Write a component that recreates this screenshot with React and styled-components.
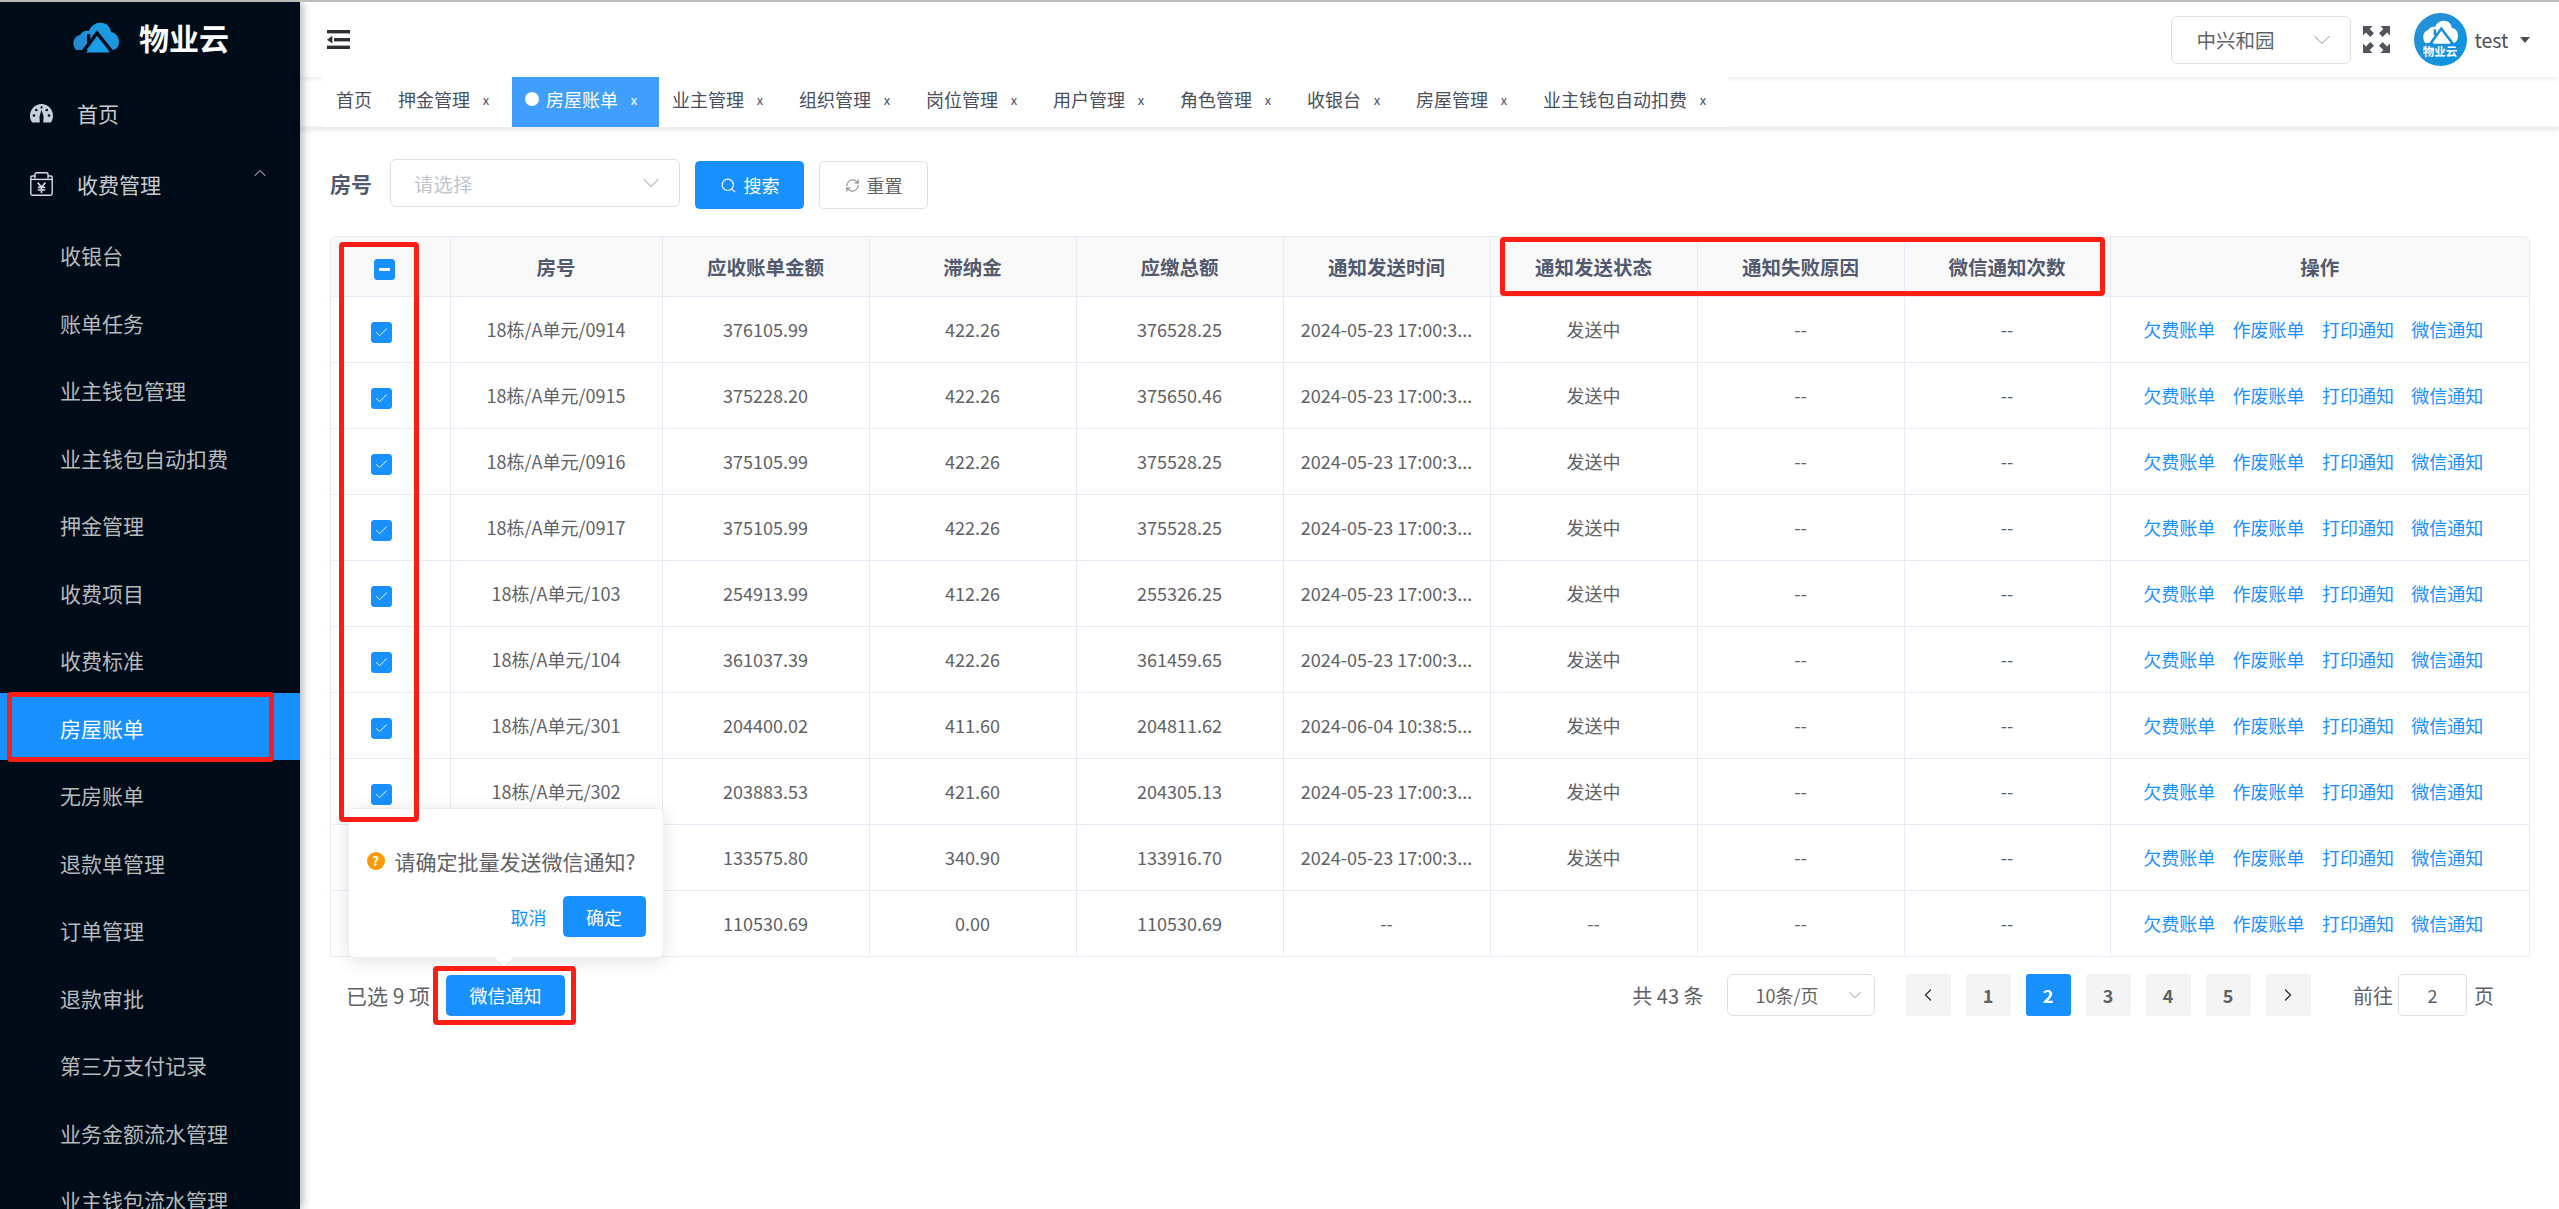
import React from 'react';
import styled, { createGlobalStyle } from 'styled-components';
import { ChevronDown, ChevronUp, ChevronLeft, ChevronRight, Search, RefreshCw, Check } from 'lucide-react';

const GlobalStyle = createGlobalStyle`
  html, body {
    margin: 0;
    padding: 0;
    height: 100%;
    overflow: hidden;
    background: #fff;
  }
  body {
    font-family: "Noto Sans CJK SC", "Noto Sans", sans-serif;
    color: #606266;
  }
  * { box-sizing: border-box; }
`;

const Page = styled.div`
  position: relative;
  width: 2559px;
  height: 1209px;
  display: flex;
  border-top: 2px solid #bcbcbc;
  overflow: hidden;
`;

const Sidebar = styled.aside`
  width: 300px;
  flex: none;
  height: 100%;
  background: #000c17;
  box-shadow: 2px 0 9px rgba(0, 21, 41, 0.35);
  overflow: hidden;
  z-index: 3;
`;

const Brand = styled.div`
  height: 76px;
  display: flex;
  align-items: center;
  gap: 20px;
  padding: 0 0 6px 73px;
  color: #fff;
  font-size: 30px;
  font-weight: 700;
`;

const MenuItem = styled.div`
  height: ${(p) => (p.$sub ? '67.5px' : `${p.$height}px`)};
  display: flex;
  align-items: center;
  padding-left: ${(p) => (p.$sub ? '60px' : '30px')};
  padding-top: ${(p) => (p.$sub ? '3px' : '0')};
  font-size: 21px;
  color: ${(p) => (p.$active ? '#fff' : p.$sub ? 'rgba(255,255,255,0.72)' : 'rgba(255,255,255,0.8)')};
  background: ${(p) => (p.$active ? '#1890ff' : 'transparent')};
  position: relative;
`;

const MenuLabel = styled.span`
  margin-left: 24px;
`;

const MenuArrow = styled(ChevronUp)`
  position: absolute;
  left: 250px;
  top: 15px;
  color: rgba(255, 255, 255, 0.5);
`;

const Main = styled.main`
  flex: 1;
  min-width: 0;
  display: flex;
  flex-direction: column;
`;

const Header = styled.header`
  height: 75px;
  flex: none;
  display: flex;
  align-items: center;
  justify-content: space-between;
  padding: 0 29.5px 0 27px;
  background: #fff;
  box-shadow: 0 1px 6px rgba(0, 21, 41, 0.1);
  position: relative;
`;

const HeaderRight = styled.div`
  display: flex;
  align-items: center;
`;

const SelectBox = styled.div`
  display: flex;
  align-items: center;
  justify-content: space-between;
  width: ${(p) => p.$width}px;
  height: ${(p) => p.$height}px;
  padding: 0 ${(p) => p.$arrowPad || 14}px 0 ${(p) => p.$pad}px;
  border: 1.5px solid #dcdfe6;
  border-radius: 6px;
  background: #fff;
  font-size: ${(p) => p.$size || 19.5}px;
  color: ${(p) => (p.$placeholder ? '#c0c4cc' : '#606266')};
  flex: none;
  svg { color: #c0c4cc; }
`;

const ExpandIcon = styled.svg`
  margin: 0 24px 0 12px;
  display: block;
`;

const Avatar = styled.div`
  width: 53px;
  height: 53px;
  margin-right: 8px;
  border-radius: 50%;
  background: linear-gradient(135deg, #2a8fd6, #0b95e0);
  display: flex;
  flex-direction: column;
  align-items: center;
  gap: 1px;
  overflow: hidden;
  color: #fff;
  font-size: 11.5px;
  font-weight: 700;
  line-height: 13px;
  padding-top: 7px;
`;

const UserName = styled.span`
  font-size: 19.5px;
  color: #4a4f57;
  width: 33px;
`;

const Caret = styled.span`
  margin-left: 12px;
  width: 0;
  height: 0;
  border-left: 5px solid transparent;
  border-right: 5px solid transparent;
  border-top: 6px solid #4a4f57;
`;

const TabBar = styled.div`
  height: 50px;
  flex: none;
  margin-left: 23px;
  width: 1405px;
  display: flex;
  background: #fff;
  position: relative;
  z-index: 1;
`;

const TabRule = styled.div`
  height: 2px;
  margin-bottom: -2px;
  box-shadow: 0 1px 4px rgba(0, 21, 41, 0.16);
  background: #eee;
`;

const Tab = styled.div`
  flex: none;
  height: 50px;
  padding: 0 13px 6px;
  display: flex;
  align-items: center;
  white-space: nowrap;
  font-size: 18px;
  color: ${(p) => (p.$active ? '#fff' : '#495060')};
  background: ${(p) => (p.$active ? '#409eff' : 'transparent')};
`;

const TabDot = styled.span`
  width: 14px;
  height: 14px;
  border-radius: 50%;
  background: #fff;
  margin-right: 7px;
`;

const TabClose = styled.span`
  margin-left: 11px;
  margin-right: ${(p) => (p.$active ? 7 : 8)}px;
  font-size: 13px;
  width: 10px;
  text-align: center;
`;

const Content = styled.section`
  flex: 1;
  padding: 32px 29px 0 30px;
`;

const FilterRow = styled.div`
  display: flex;
  align-items: flex-end;
  height: 50px;
`;

const FilterLabel = styled.label`
  width: 60px;
  align-self: flex-start;
  line-height: 48px;
  font-size: 21px;
  font-weight: 700;
  color: #515a6e;
`;

const FilterField = styled.div`
  align-self: flex-start;
`;

const Button = styled.button`
  display: inline-flex;
  align-items: center;
  justify-content: center;
  gap: ${(p) => p.$gap || 0}px;
  width: ${(p) => p.$width}px;
  height: ${(p) => p.$height}px;
  margin-left: ${(p) => p.$left || 0}px;
  padding: 0;
  font: inherit;
  font-size: 18px;
  border-radius: 4.5px;
  border: 1.5px solid ${(p) => (p.$plain ? '#dcdfe6' : '#1890ff')};
  background: ${(p) => (p.$plain ? '#fff' : '#1890ff')};
  color: ${(p) => (p.$plain ? '#606266' : '#fff')};
`;

const TableWrap = styled.div`
  margin-top: 27px;
  border: 1.5px solid #e6ebf5;
  border-bottom-width: 1px;
  border-radius: 6px 6px 0 0;
  overflow: hidden;
`;

const Table = styled.table`
  width: 100%;
  table-layout: fixed;
  border-collapse: collapse;
`;

const Th = styled.th`
  height: 59px;
  padding: 0 15px;
  background: #f8f8f9;
  border-right: 1.5px solid #e6ebf5;
  border-bottom: 1.5px solid #e6ebf5;
  font-size: 19.5px;
  font-weight: 700;
  color: #515a6e;
  text-align: center;
  &:last-child { border-right: 0; }
`;

const Td = styled.td`
  height: 66px;
  padding: 0 15px;
  border-right: 1.5px solid #e6ebf5;
  border-bottom: 1.5px solid #e6ebf5;
  font-size: 18px;
  color: #606266;
  text-align: center;
  white-space: nowrap;
  overflow: hidden;
  &:last-child {
    border-right: 0;
    padding-right: 28px;
  }
  tr:last-child & { border-bottom: 0; }
`;

const CheckBox = styled.span`
  display: inline-flex;
  align-items: center;
  justify-content: center;
  vertical-align: middle;
  width: 21px;
  height: 21px;
  border-radius: 3px;
  background: ${(p) => (p.$on ? '#1890ff' : '#fff')};
  border: 1.5px solid ${(p) => (p.$on ? '#1890ff' : '#dcdfe6')};
  color: #fff;
  margin: 2px 17px 0 0;
`;

const HeadCheck = styled(CheckBox)`
  margin: 0 11px 0 0;
  &::after {
    content: '';
    width: 11px;
    height: 2.5px;
    background: #fff;
  }
`;

const ActionLink = styled.a`
  color: #1890ff;
  margin: 0 8.65px;
  font-size: 18px;
`;

const Footer = styled.div`
  position: relative;
  display: flex;
  align-items: center;
  justify-content: space-between;
  padding: 17px 36px 0 16px;
`;

const FooterLeft = styled.div`
  display: flex;
  align-items: center;
`;

const Selected = styled.span`
  font-size: 21px;
  color: #606266;
  width: 100px;
  white-space: nowrap;
`;

const Pager = styled.div`
  display: flex;
  align-items: center;
  font-size: 20px;
`;

const PagerText = styled.span`
  margin: ${(p) => p.$margin || 0};
`;

const PageButton = styled.span`
  display: flex;
  align-items: center;
  justify-content: center;
  width: 45px;
  height: 42px;
  margin-left: ${(p) => (p.$first ? 31 : 15)}px;
  border-radius: 3px;
  font-size: 18px;
  font-weight: 700;
  background: ${(p) => (p.$active ? '#1890ff' : '#f4f4f5')};
  color: ${(p) => (p.$active ? '#fff' : '#606266')};
  svg { color: #303133; }
`;

const JumpInput = styled.span`
  display: flex;
  align-items: center;
  justify-content: center;
  width: 69px;
  height: 42px;
  margin: 0 7px 0 5px;
  font-size: 18px;
  border: 1.5px solid #dcdfe6;
  border-radius: 4.5px;
`;

const Popover = styled.div`
  position: absolute;
  left: 18px;
  bottom: calc(100% - 1px);
  width: 316px;
  height: 150px;
  padding: 0 17.5px;
  background: #fff;
  border: 1.5px solid #ebeef5;
  border-radius: 6px;
  box-shadow: 0 3px 18px rgba(0, 0, 0, 0.12);
  z-index: 5;

  &::after {
    content: '';
    position: absolute;
    left: 149px;
    bottom: -7px;
    width: 12px;
    height: 12px;
    background: #fff;
    transform: rotate(45deg);
    box-shadow: 2px 2px 3px rgba(0, 0, 0, 0.04);
  }
`;

const PopoverText = styled.p`
  display: flex;
  align-items: center;
  gap: 10px;
  margin: 0;
  padding-top: 16px;
  height: 87px;
  font-size: 21px;
  line-height: 30px;
  white-space: nowrap;
`;

const QuestionIcon = styled.span`
  flex: none;
  width: 18px;
  height: 18px;
  border-radius: 50%;
  background: #ff9900;
  color: #fff;
  font-size: 13px;
  font-weight: 700;
  line-height: 18px;
  text-align: center;
`;

const PopoverActions = styled.div`
  display: flex;
  align-items: center;
  justify-content: flex-end;
  color: #1890ff;
  font-size: 18px;
`;

const Mark = styled.div`
  position: absolute;
  left: ${(p) => p.$x}px;
  top: ${(p) => p.$y}px;
  width: ${(p) => p.$w}px;
  height: ${(p) => p.$h}px;
  border: 5px solid #fa1e14;
  border-radius: 4px;
  z-index: 9;
  pointer-events: none;
`;

const CloudLogo = ({ houseBg = '#000c17' }) => (
  <svg width="46" height="31" viewBox="0 0 46 31">
    <defs>
      <linearGradient id="cloudFill" x1="0" y1="1" x2="1" y2="0">
        <stop offset="0" stopColor="#2a84cc" />
        <stop offset="1" stopColor="#14a4ea" />
      </linearGradient>
    </defs>
    <path d="M3 28C-1 24 -1 15 7 13C9 9 13 8 16 9C18 3 24 0 29 1C34 1 37 5 38 10C43 11 46 15 46 20C46 25 43 28 39 28Z" fill="url(#cloudFill)" />
    <path d="M9 31L24 11L40 31" fill="none" stroke={houseBg} strokeWidth="3.4" />
    <rect x="14" y="12" width="3.2" height="9" fill={houseBg} />
    <path d="M13 30.5L25 17L37 30.5Z" fill="#1a9fe8" />
  </svg>
);

const AvatarLogo = () => (
  <svg width="35" height="24" viewBox="0 0 46 31">
    <path d="M3 30C-1 25 -1 15 7 13C9 9 13 8 16 9C18 3 24 0 29 1C34 1 37 5 38 10C43 11 46 15 46 20C46 26 43 30 39 30Z" fill="#fff" />
    <path d="M9 32L24 11L40 32" fill="none" stroke="#1d8fd8" strokeWidth="3.4" />
    <rect x="14" y="12" width="3.2" height="8" fill="#1d8fd8" />
    <path d="M13 31L24.5 18L36 31Z" fill="#fff" />
  </svg>
);

const GaugeIcon = () => (
  <svg width="23" height="19" viewBox="0 0 23 19">
    <path d="M2.2 18.5C.8 16.6 0 14.3 0 11.7C0 5.2 5.1 0 11.5 0S23 5.2 23 11.7C23 14.3 22.2 16.6 20.8 18.5H13.2L13.6 12.6L11.5 5.8L9.5 12.6L9.8 18.5Z" fill="#c7d0da" />
    <g fill="#000c17">
      <circle cx="4" cy="11.5" r="1.3" />
      <circle cx="19" cy="11.5" r="1.3" />
      <circle cx="6.3" cy="6" r="1.3" />
      <circle cx="16.7" cy="6" r="1.3" />
      <circle cx="11.5" cy="3.4" r="1.1" />
    </g>
  </svg>
);

const FeeIcon = () => (
  <svg width="23" height="24" viewBox="0 0 23 24" fill="none" stroke="#d5dbe2" strokeWidth="1.4">
    <path d="M5 4H2.4C1.4 4 .8 4.7 .8 5.5V21.6C.8 22.6 1.4 23.2 2.4 23.2H20.6C21.6 23.2 22.2 22.6 22.2 21.6V5.5C22.2 4.7 21.6 4 20.6 4H18" />
    <path d="M5 6.5V2.6C5 1.4 5.8 .8 6.8 .8H16.2C17.2 .8 18 1.4 18 2.6V6.5" />
    <path d="M.8 7.4H22.2" />
    <path d="M7.6 10.6L11.5 15L15.4 10.6M11.5 15V21M7.8 15.4H15.2M7.8 18H15.2" strokeWidth="1.6" />
  </svg>
);

const HamburgerIcon = () => (
  <svg width="23" height="19" viewBox="0 0 23 19" fill="#2c2f33">
    <rect x="0" y="0" width="23" height="3.4" />
    <rect x="7" y="8" width="16" height="3.4" />
    <rect x="0" y="15.6" width="23" height="3.4" />
    <path d="M0 9.7L5.4 5.8V13.6Z" />
  </svg>
);

const FullScreenIcon = () => (
  <ExpandIcon width="27" height="27" viewBox="0 0 27 27" fill="#50555e">
    <path d="M0 0H9.5L6.6 2.9L11 7.3L7.3 11L2.9 6.6L0 9.5Z" />
    <path d="M27 0H17.5L20.4 2.9L16 7.3L19.7 11L24.1 6.6L27 9.5Z" />
    <path d="M0 27H9.5L6.6 24.1L11 19.7L7.3 16L2.9 20.4L0 17.5Z" />
    <path d="M27 27H17.5L20.4 24.1L16 19.7L19.7 16L24.1 20.4L27 17.5Z" />
  </ExpandIcon>
);

const subMenus = [
  '收银台', '账单任务', '业主钱包管理', '业主钱包自动扣费', '押金管理', '收费项目', '收费标准',
  '房屋账单', '无房账单', '退款单管理', '订单管理', '退款审批', '第三方支付记录', '业务金额流水管理', '业主钱包流水管理',
];

const tabs = [
  '押金管理', '房屋账单', '业主管理', '组织管理', '岗位管理', '用户管理', '角色管理', '收银台', '房屋管理', '业主钱包自动扣费',
];

const columns = ['房号', '应收账单金额', '滞纳金', '应缴总额', '通知发送时间', '通知发送状态', '通知失败原因', '微信通知次数', '操作'];

const sent = '2024-05-23 17:00:3...';

// the last two room numbers sit under the popover in the picture, so they stay blank
const rows = [
  ['18栋/A单元/0914', '376105.99', '422.26', '376528.25', sent, '发送中'],
  ['18栋/A单元/0915', '375228.20', '422.26', '375650.46', sent, '发送中'],
  ['18栋/A单元/0916', '375105.99', '422.26', '375528.25', sent, '发送中'],
  ['18栋/A单元/0917', '375105.99', '422.26', '375528.25', sent, '发送中'],
  ['18栋/A单元/103', '254913.99', '412.26', '255326.25', sent, '发送中'],
  ['18栋/A单元/104', '361037.39', '422.26', '361459.65', sent, '发送中'],
  ['18栋/A单元/301', '204400.02', '411.60', '204811.62', '2024-06-04 10:38:5...', '发送中'],
  ['18栋/A单元/302', '203883.53', '421.60', '204305.13', sent, '发送中'],
  ['', '133575.80', '340.90', '133916.70', sent, '发送中'],
  ['', '110530.69', '0.00', '110530.69', '--', '--'],
];

const actions = ['欠费账单', '作废账单', '打印通知', '微信通知'];

export default function App() {
  return (
    <Page>
      <GlobalStyle />
      <Sidebar>
        <Brand>
          <CloudLogo />
          物业云
        </Brand>
        <MenuItem $height={70}>
          <GaugeIcon />
          <MenuLabel>首页</MenuLabel>
        </MenuItem>
        <MenuItem $height={72}>
          <FeeIcon />
          <MenuLabel>收费管理</MenuLabel>
          <MenuArrow size={20} strokeWidth={1.4} />
        </MenuItem>
        {subMenus.map((name) => (
          <MenuItem key={name} $sub $active={name === '房屋账单'}>{name}</MenuItem>
        ))}
      </Sidebar>

      <Main>
        <Header>
          <HamburgerIcon />
          <HeaderRight>
            <SelectBox $width={180} $height={48} $pad={25}>
              中兴和园
              <ChevronDown size={28} strokeWidth={1.2} />
            </SelectBox>
            <FullScreenIcon />
            <Avatar>
              <AvatarLogo />
              物业云
            </Avatar>
            <UserName>test</UserName>
            <Caret />
          </HeaderRight>
        </Header>

        <TabBar>
          <Tab>首页</Tab>
          {tabs.map((name) => (
            <Tab key={name} $active={name === '房屋账单'}>
              {name === '房屋账单' && <TabDot />}
              {name}
              <TabClose $active={name === '房屋账单'}>x</TabClose>
            </Tab>
          ))}
        </TabBar>
        <TabRule />

        <Content>
          <FilterRow>
            <FilterLabel>房号</FilterLabel>
            <FilterField>
              <SelectBox $width={290} $height={48} $pad={23} $placeholder>
                请选择
                <ChevronDown size={28} strokeWidth={1.2} />
              </SelectBox>
            </FilterField>
            <Button $width={109} $height={48} $left={15} $gap={7}>
              <Search size={17} strokeWidth={1.6} />
              搜索
            </Button>
            <Button $width={109} $height={48} $left={15} $gap={7} $plain>
              <RefreshCw size={15} strokeWidth={1.4} />
              重置
            </Button>
          </FilterRow>

          <TableWrap>
            <Table>
              <colgroup>
                <col width="119" />
                <col width="212" />
                <col width="207" />
                <col width="207" />
                <col width="207" />
                <col width="207" />
                <col width="207" />
                <col width="207" />
                <col width="206" />
                <col />
              </colgroup>
              <thead>
                <tr>
                  <Th><HeadCheck $on /></Th>
                  {columns.map((c) => <Th key={c}>{c}</Th>)}
                </tr>
              </thead>
              <tbody>
                {rows.map((row, idx) => (
                  <tr key={idx}>
                    <Td>
                      <CheckBox $on={idx < 9}>
                        {idx < 9 && <Check size={15} strokeWidth={1.5} />}
                      </CheckBox>
                    </Td>
                    {row.map((cell, i) => <Td key={i}>{cell}</Td>)}
                    <Td>--</Td>
                    <Td>--</Td>
                    <Td>
                      {actions.map((a) => <ActionLink key={a}>{a}</ActionLink>)}
                    </Td>
                  </tr>
                ))}
              </tbody>
            </Table>
          </TableWrap>

          <Footer>
            <Popover>
              <PopoverText>
                <QuestionIcon>?</QuestionIcon>
                请确定批量发送微信通知?
              </PopoverText>
              <PopoverActions>
                取消
                <Button $width={83} $height={41} $left={16}>确定</Button>
              </PopoverActions>
            </Popover>
            <FooterLeft>
              <Selected>已选 9 项</Selected>
              <Button $width={119} $height={41}>微信通知</Button>
            </FooterLeft>
            <Pager>
              <PagerText $margin="0 23px 0 0">共 43 条</PagerText>
              <SelectBox $width={148} $height={42} $pad={28} $arrowPad={8} $size={18}>
                10条/页
                <ChevronDown size={22} strokeWidth={1.2} />
              </SelectBox>
              <PageButton $first><ChevronLeft size={20} strokeWidth={1.6} /></PageButton>
              {[1, 2, 3, 4, 5].map((n) => (
                <PageButton key={n} $active={n === 2}>{n}</PageButton>
              ))}
              <PageButton><ChevronRight size={20} strokeWidth={1.6} /></PageButton>
              <PagerText $margin="0 0 0 42.5px">前往</PagerText>
              <JumpInput>2</JumpInput>
              <PagerText>页</PagerText>
            </Pager>
          </Footer>
        </Content>
      </Main>

      <Mark $x={7} $y={690} $w={267} $h={70} />
      <Mark $x={339} $y={240} $w={80} $h={580} />
      <Mark $x={1500} $y={235} $w={605} $h={59} />
      <Mark $x={433} $y={964} $w={143} $h={59} />
    </Page>
  );
}
